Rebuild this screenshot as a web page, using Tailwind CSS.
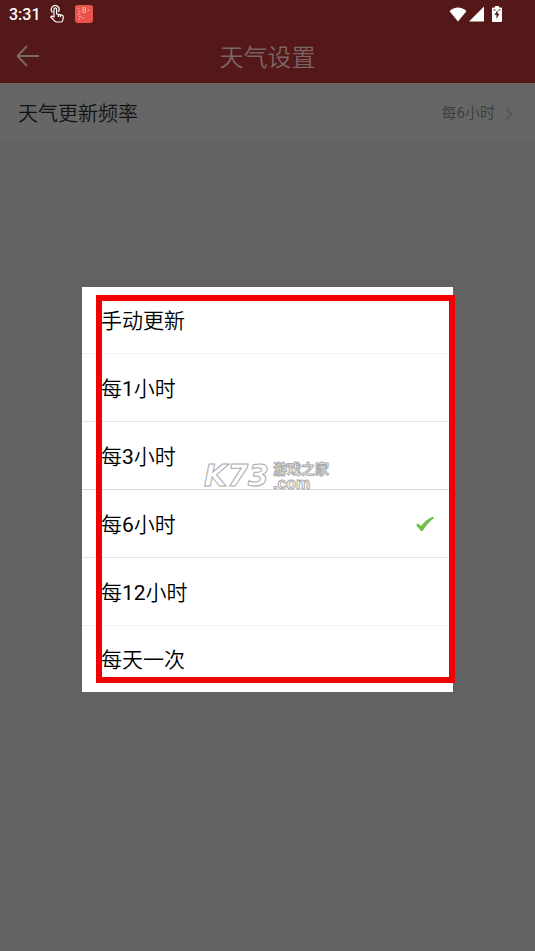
<!DOCTYPE html>
<html lang="zh-CN">
<head>
  <meta charset="UTF-8" />
  <meta name="viewport" content="width=device-width, initial-scale=1.0" />
  <title>天气设置</title>
  <script src="https://cdn.jsdelivr.net/npm/@tailwindcss/browser@4"></script>
</head>
<body class="min-h-screen bg-[#626262] font-[Roboto,'Noto_Sans_CJK_SC',sans-serif]">
  <!-- Status bar -->
  <div class="flex h-7 items-center justify-between bg-[#541819] pl-[9px] pr-[33px] text-white">
    <div class="flex items-center gap-2">
      <span class="pt-[2px] text-base font-medium leading-7">3:31</span>
      <svg class="h-[18px] w-4" viewBox="0 0 16 18" fill="none" stroke="currentColor" stroke-width="1.2" stroke-linecap="round" stroke-linejoin="round">
        <path d="M5 11V4.200a1.300 1.300 0 0 1 2.600 0V9l5.200 1.200c1.200.3 1.700 1 1.500 2.200l-.6 3.100c-.2 1-.8 1.500-1.800 1.500H7.500c-.6 0-1-.2-1.400-.6L1.700 12c.6-.9 1.400-1 2.200-.6L5 12" />
        <path d="M3.200 7A3.900 3.900 0 1 1 9.600 6.400" />
        <path d="M9.400 9.400v2M11.300 9.900v1.800" />
      </svg>
      <svg class="ml-[2px] h-[18px] w-[18px]" viewBox="0 0 18 18">
        <rect width="18" height="18" rx="3" fill="#e9534c" />
        <path d="M8 2.500h2.500V7.500H8zM8 5h2.500M2.500 4h2M3.500 6.500h2M2.500 9h3M4 11.500h2M3 14h2M7 13h2M14 4l-1 2" fill="none" stroke="#f9aaa2" stroke-width="1" />
      </svg>
    </div>
    <div class="flex items-center">
      <svg class="h-[15px] w-[18px]" viewBox="0 0 18 16" fill="currentColor">
        <path d="M0 4.500C5-.8 13-.8 18 4.500L9 15.500z" />
      </svg>
      <svg class="ml-[2px] h-4 w-[15px]" viewBox="0 0 15 16" fill="currentColor">
        <path d="M15 .5v15H0z" />
      </svg>
      <svg class="ml-2 h-4 w-[10px]" viewBox="0 0 10 16">
        <path d="M3 0h4v1.500h2a1 1 0 0 1 1 1V15a1 1 0 0 1-1 1H1a1 1 0 0 1-1-1V2.500a1 1 0 0 1 1-1h2z" fill="currentColor" />
        <path d="M5.600 4 2.500 9h2V13L7.500 7.800H5.600zM1.500 3.500h2v1h-2zM6.500 3.500h2v1h-2z" fill="#541819" />
      </svg>
    </div>
  </div>

  <!-- Title bar -->
  <header class="grid h-[55px] grid-cols-[56px_1fr_56px] items-center bg-[#541819] text-[#7b6666]">
    <button type="button" aria-label="返回" class="flex h-full items-center pl-4">
      <svg class="h-6 w-6" viewBox="0 0 24 24" fill="none" stroke="currentColor" stroke-width="2">
        <path d="M11 2 1.500 12 11 22M1.500 12H23" />
      </svg>
    </button>
    <h1 class="pt-1 text-center text-2xl font-[350]">天气设置</h1>
  </header>

  <!-- Setting row -->
  <main>
    <button type="button" class="flex h-[59px] w-full items-center justify-between bg-[#666666] pl-[18px] pr-[22px] pt-[2px] font-[350]">
      <span class="text-xl text-[#111111]">天气更新频率</span>
      <span class="flex items-center gap-[10px] text-[15px] text-[#3c3c3c]">
        <span>每<span class="font-normal">6</span>小时</span>
        <svg class="h-3 w-2" viewBox="0 0 8 12" fill="none" stroke="#4c4c4c" stroke-width="1.200">
          <path d="M1.500 1 6.500 6l-5 5" />
        </svg>
      </span>
    </button>
  </main>

  <!-- Frequency dialog -->
  <div class="fixed inset-0 flex items-center justify-center px-[82px] pt-7">
    <div role="dialog" aria-label="天气更新频率" class="relative w-full bg-white">
      <div class="text-[21px] font-[350] text-black">
        <label class="flex h-[67px] items-center border-b border-[#f1f1f1] px-[19px] pt-1">
          <input type="radio" name="freq" class="peer sr-only" />
          <span>手动更新</span>
        </label>
        <label class="flex h-[68px] items-center border-b border-[#e3e3e3] px-[19px] pt-1">
          <input type="radio" name="freq" class="peer sr-only" />
          <span>每<span class="font-normal">1</span>小时</span>
        </label>
        <label class="flex h-[68px] items-center border-b border-[#d8d8d8] px-[19px] pt-1">
          <input type="radio" name="freq" class="peer sr-only" />
          <span>每<span class="font-normal">3</span>小时</span>
        </label>
        <label class="flex h-[68px] items-center justify-between border-b border-[#e3e3e3] px-[19px] pt-1">
          <input type="radio" name="freq" class="peer sr-only" checked />
          <span>每<span class="font-normal">6</span>小时</span>
          <svg class="invisible mb-1 h-4 w-[18px] peer-checked:visible" viewBox="0 0 18 16">
            <path d="M0 9 2 7.500l3 2.500C8.500 6 12 2.500 16.800.8L18 2C13.500 5.500 10 9.500 6.500 15H5z" fill="#6cbf4b" />
          </svg>
        </label>
        <label class="flex h-[68px] items-center border-b border-[#f1f1f1] px-[19px] pt-1">
          <input type="radio" name="freq" class="peer sr-only" />
          <span>每<span class="font-normal">12</span>小时</span>
        </label>
        <label class="flex h-[66px] items-center px-[19px] pt-1">
          <input type="radio" name="freq" class="peer sr-only" />
          <span>每天一次</span>
        </label>
      </div>

      <!-- Watermark -->
      <div class="pointer-events-none absolute left-[122px] top-[173px] flex items-center gap-1 font-bold text-white [-webkit-text-stroke:1px_#aaaaaa]">
        <span class="font-['DejaVu_Sans',sans-serif] text-[30px] italic leading-8">K73</span>
        <span class="flex flex-col">
          <span class="font-['Noto_Sans_CJK_SC',sans-serif] text-sm leading-4">游戏之家</span>
          <span class="font-['Liberation_Sans',sans-serif] text-base leading-4">.com</span>
        </span>
      </div>

      <!-- Highlight frame -->
      <div class="pointer-events-none absolute -right-[2px] bottom-[9px] left-[14px] top-2 border-[6px] border-[#f00000]"></div>
    </div>
  </div>
</body>
</html>
